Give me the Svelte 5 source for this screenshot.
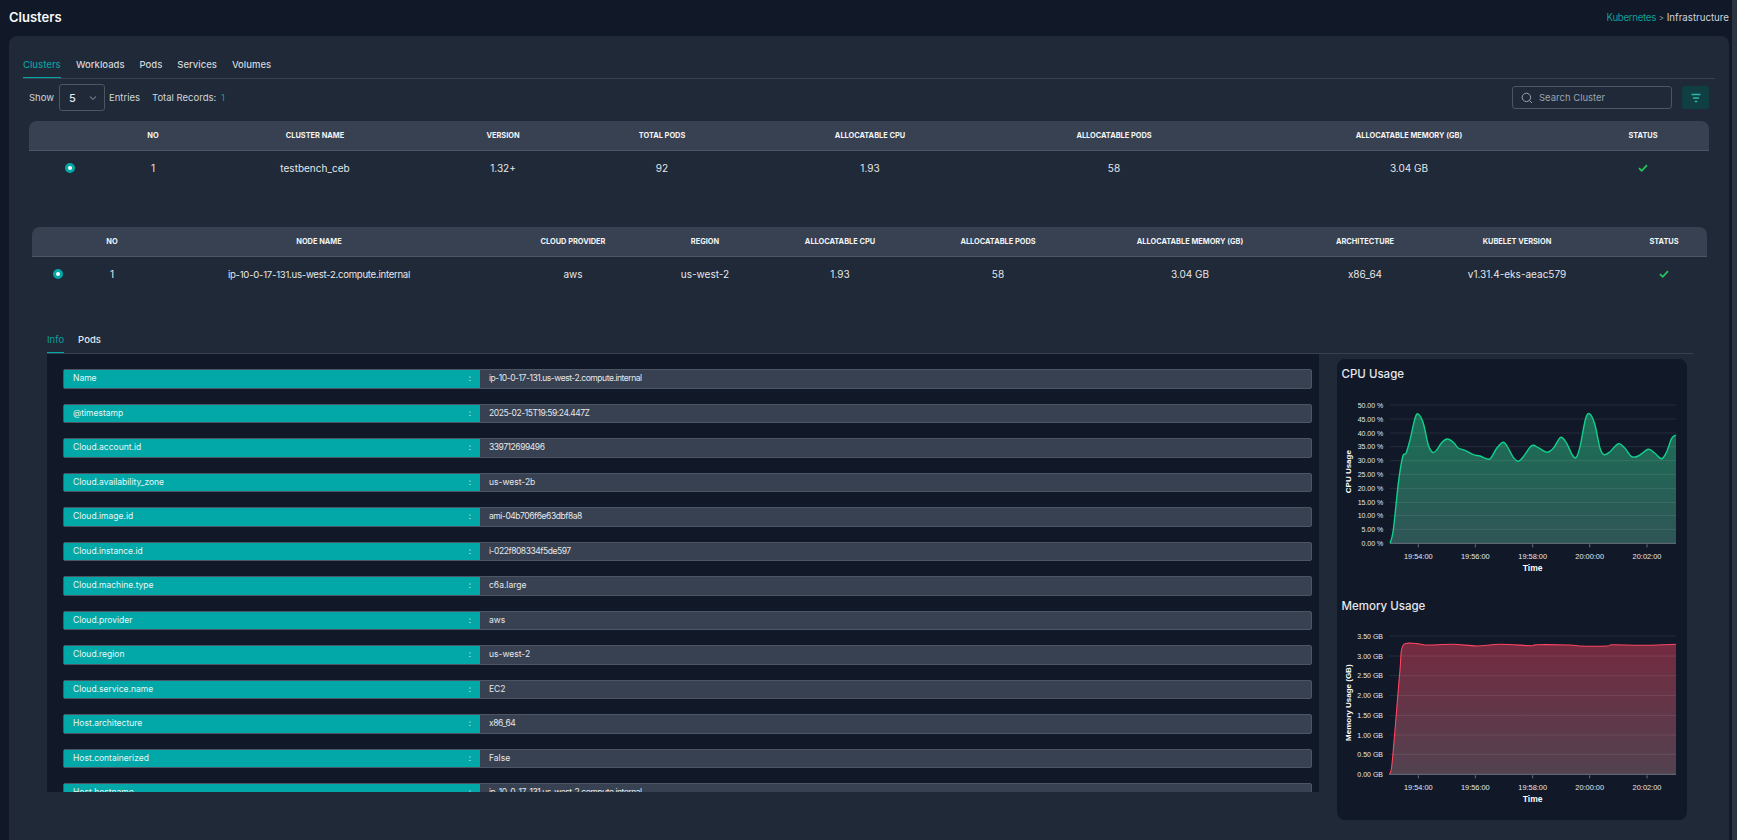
<script>
  const clusterHead = ['', 'NO', 'CLUSTER NAME', 'VERSION', 'TOTAL PODS', 'ALLOCATABLE CPU', 'ALLOCATABLE PODS', 'ALLOCATABLE MEMORY (GB)', 'STATUS'];
  const clusterRow = ['1', 'testbench_ceb', '1.32+', '92', '1.93', '58', '3.04 GB'];
  const nodeHead = ['', 'NO', 'NODE NAME', 'CLOUD PROVIDER', 'REGION', 'ALLOCATABLE CPU', 'ALLOCATABLE PODS', 'ALLOCATABLE MEMORY (GB)', 'ARCHITECTURE', 'KUBELET VERSION', 'STATUS'];
  const nodeRow = ['1', 'ip-10-0-17-131.us-west-2.compute.internal', 'aws', 'us-west-2', '1.93', '58', '3.04 GB', 'x86_64', 'v1.31.4-eks-aeac579'];
  const info = [
    ['Name', 'ip-10-0-17-131.us-west-2.compute.internal'],
    ['@timestamp', '2025-02-15T19:59:24.447Z'],
    ['Cloud.account.id', '339712699496'],
    ['Cloud.availability_zone', 'us-west-2b'],
    ['Cloud.image.id', 'ami-04b706f6e63dbf8a8'],
    ['Cloud.instance.id', 'i-022f808334f5de597'],
    ['Cloud.machine.type', 'c6a.large'],
    ['Cloud.provider', 'aws'],
    ['Cloud.region', 'us-west-2'],
    ['Cloud.service.name', 'EC2'],
    ['Host.architecture', 'x86_64'],
    ['Host.containerized', 'False'],
    ['Host.hostname', 'ip-10-0-17-131.us-west-2.compute.internal']
  ];
  const digitHeavy = (s) => /\d.*\d.*\d.*\d/.test(s);

  const cpuPts = [[210,580],[220,540],[235,400],[248,320],[258,310],[270,270],[285,205],[295,192],[310,220],[325,285],[338,307],[350,300],[365,278],[382,267],[400,277],[415,294],[435,301],[460,314],[480,318],[500,326],[512,325],[530,295],[550,277],[565,295],[580,322],[595,334],[610,320],[635,287],[655,293],[680,307],[700,295],[722,262],[740,280],[755,312],[768,323],[780,290],[797,205],[810,192],[825,225],[840,295],[852,314],[870,305],[895,281],[915,295],[935,320],[955,318],[985,298],[1005,310],[1025,326],[1040,305],[1055,265],[1068,255]];
  const memPts = [[208,553],[215,530],[225,420],[240,240],[250,165],[300,162],[320,165],[400,163],[470,168],[540,163],[635,167],[650,164],[750,165],[780,168],[860,168],[880,164],[980,166],[1068,163]];

  function smooth(pts, ox, oy) {
    const p = pts.map(([x, y]) => [x / 3 - ox, y / 3 - oy]);
    let d = `M${p[0][0].toFixed(1)} ${p[0][1].toFixed(1)}`;
    for (let i = 0; i < p.length - 1; i++) {
      const a = p[Math.max(i - 1, 0)], b = p[i], c = p[i + 1], e = p[Math.min(i + 2, p.length - 1)];
      d += `C${(b[0] + (c[0] - a[0]) / 6).toFixed(1)} ${(b[1] + (c[1] - a[1]) / 6).toFixed(1)} ${(c[0] - (e[0] - b[0]) / 6).toFixed(1)} ${(c[1] - (e[1] - b[1]) / 6).toFixed(1)} ${c[0].toFixed(1)} ${c[1].toFixed(1)}`;
    }
    return d;
  }

  const timeLabels = ['19:54:00', '19:56:00', '19:58:00', '20:00:00', '20:02:00'];
  const tickX = [295, 466, 638, 809, 981].map((x) => x / 3 - 17);

  const charts = [
    {
      id: 'cpu', title: 'CPU Usage', axis: 'CPU Usage', oy: 39, x0: 210, base: 580, axisY: 365, h: 208, sw: 1.4,
      line: smooth(cpuPts, 17, 39),
      labels: ['50.00 %','45.00 %','40.00 %','35.00 %','30.00 %','25.00 %','20.00 %','15.00 %','10.00 %','5.00 %','0.00 %'],
      grid: [165,207,249,290,332,373,415,457,497,538,580], top: '#1a7056', bottom: '#2f5556', stroke: '#10d08c', lab: 190
    },
    {
      id: 'mem', title: 'Memory Usage', axis: 'Memory Usage (GB)', oy: 31, x0: 208, base: 553, axisY: 338, h: 192, sw: 1.1,
      line: smooth(memPts, 17, 31),
      labels: ['3.50 GB','3.00 GB','2.50 GB','2.00 GB','1.50 GB','1.00 GB','0.50 GB','0.00 GB'],
      grid: [138,198,257,316,376,435,493,553], top: '#742a40', bottom: '#524250', stroke: '#ff4560', lab: 189
    }
  ];
</script>

<div class="page">
  <main class="main">
    <header class="topbar">
      <h1>Clusters</h1>
      <div class="crumb"><span class="teal kube">Kubernetes</span> <span class="sep">&gt;</span> <span>Infrastructure</span></div>
    </header>

    <section class="card">
      <nav class="tabs">
        <span class="tab active">Clusters</span>
        <span class="tab">Workloads</span>
        <span class="tab">Pods</span>
        <span class="tab">Services</span>
        <span class="tab">Volumes</span>
      </nav>

      <div class="toolbar">
        <span>Show</span>
        <div class="select">
          <span>5</span>
          <svg width="8" height="6" viewBox="0 0 8 6"><path d="M1 1.5 4 4.5 7 1.5" fill="none" stroke="#6b7280" stroke-width="1.1"/></svg>
        </div>
        <span>Entries</span>
        <span class="records">Total Records: <b class="teal">1</b></span>
        <div class="search">
          <svg width="12" height="12" viewBox="0 0 12 12"><circle cx="5.4" cy="5.4" r="4.2" fill="none" stroke="#9ca3af" stroke-width="1"/><path d="M8.5 8.5 11 11" stroke="#9ca3af" stroke-width="1"/></svg>
          <span>Search Cluster</span>
        </div>
        <div class="filter">
          <svg width="12" height="10" viewBox="0 0 12 10"><path d="M1.5 1.5h9M3 5h6M4.8 8.5h2.4" stroke="#2bb8ad" stroke-width="1.3" fill="none"/></svg>
        </div>
      </div>

      <div class="table t1">
        <div class="thead">
          {#each clusterHead as h}<div class="cell">{h}</div>{/each}
        </div>
        <div class="trow">
          <div class="cell radio-cell"><span class="radio"></span></div>
          {#each clusterRow as c}<div class="cell">{c}</div>{/each}
          <div class="cell">
            <svg class="check" width="10" height="8" viewBox="0 0 10 8"><path d="M1 4.2 3.7 6.8 9 1.2" fill="none" stroke="#22c55e" stroke-width="1.8"/></svg>
          </div>
        </div>
      </div>

      <div class="table t2">
        <div class="thead">
          {#each nodeHead as h}<div class="cell">{h}</div>{/each}
        </div>
        <div class="trow">
          <div class="cell radio-cell"><span class="radio"></span></div>
          {#each nodeRow as c, i}<div class="cell" class:tight={i === 1}>{c}</div>{/each}
          <div class="cell">
            <svg class="check" width="10" height="8" viewBox="0 0 10 8"><path d="M1 4.2 3.7 6.8 9 1.2" fill="none" stroke="#22c55e" stroke-width="1.8"/></svg>
          </div>
        </div>
      </div>

      <div class="detail">
        <nav class="subtabs">
          <span class="subtab active">Info</span>
          <span class="subtab">Pods</span>
        </nav>
        <div class="detail-body">
          <div class="panel">
            {#each info as [k, v]}
              <div class="kv">
                <div class="key"><span>{k}</span><span>:</span></div>
                <div class="val" class:digits={digitHeavy(v)}>{v}</div>
              </div>
            {/each}
          </div>
          <aside class="chart-card">
            {#each charts as c}
              <h2>{c.title}</h2>
              <svg class="chart" width="350" height={c.h}>
                <defs>
                  <linearGradient id="fill-{c.id}" x1="0" y1="0" x2="0" y2="1">
                    <stop offset="0" stop-color={c.top}/>
                    <stop offset="1" stop-color={c.bottom}/>
                  </linearGradient>
                </defs>
                <path d="{c.line}L{1068 / 3 - 17} {c.base / 3 - c.oy}L{c.x0 / 3 - 17} {c.base / 3 - c.oy}Z" fill="url(#fill-{c.id})"/>
                {#each c.grid as g, i}
                  <line x1={c.x0 / 3 - 17} x2={1068 / 3 - 17} y1={g / 3 - c.oy} y2={g / 3 - c.oy} class={i === c.grid.length - 1 ? 'base' : 'grid'}/>
                  <text class="ylab" x={c.lab / 3 - 17} y={g / 3 - c.oy + 2.5}>{c.labels[i]}</text>
                {/each}
                <path d={c.line} fill="none" stroke={c.stroke} stroke-width={c.sw}/>
                {#each tickX as x, i}
                  <line class="tick" x1={x} x2={x} y1={c.base / 3 - c.oy + 1} y2={c.base / 3 - c.oy + 4}/>
                  <text class="xlab" x={x} y={c.base / 3 - c.oy + 15.5}>{timeLabels[i]}</text>
                {/each}
                <text class="axis-x" x={638 / 3 - 17} y={c.base / 3 - c.oy + 28}>Time</text>
                <text class="axis-y" transform="translate({85 / 3 - 17 + 3} {c.axisY / 3 - c.oy}) rotate(-90)">{c.axis}</text>
              </svg>
            {/each}
          </aside>
        </div>
      </div>
    </section>
  </main>
  <div class="scrollbar"></div>
</div>

<style>
  :global(body) { margin: 0; background: #111827; }
  .page {
    display: grid; grid-template-columns: 1fr 5px; height: 840px; overflow: hidden;
    background: #111827; color: #e5e7eb;
    font-family: Inter, "Open Sans", sans-serif; font-size: 10px;
  }
  .scrollbar { background: #2b3441; }
  .main { padding: 0 3px 0 9px; min-width: 0; }
  .topbar { height: 36px; display: flex; justify-content: space-between; align-items: center; box-sizing: border-box; padding-bottom: 2px; }
  h1 { margin: 0; font-size: 13px; font-weight: 600; color: #f9fafb; }
  .crumb { font-size: 9.7px; color: #d1d5db; }
  .kube { letter-spacing: -0.3px; }
  .sep { color: #9ca3af; font-size: 8px; }
  .teal { color: #0d9f9b; font-weight: 400; }
  .card { background: #1f2937; border-radius: 8px 8px 0 0; height: 804px; padding: 16px 14px 0; box-sizing: border-box; overflow: hidden; }
  .tabs { display: flex; height: 26px; border-bottom: 1px solid #374151; gap: 15px; }
  .tab { height: 26px; box-sizing: border-box; padding-top: 7px; font-size: 9.5px; font-weight: 500; color: #d1d5db; }
  .tab.active { color: #0d9f9b; border-bottom: 1px solid #02a7a7; width: 38px; }
  .toolbar { display: flex; align-items: center; height: 27px; margin: 5px 6px 10px; color: #d1d5db; font-size: 9.5px; }
  .select { width: 46px; height: 27px; margin: 0 4px 0 5px; box-sizing: border-box; border: 1px solid #4b5563; border-radius: 3px; display: flex; align-items: center; justify-content: space-between; padding: 0 7px 0 9px; font-size: 11px; font-weight: 500; color: #e5e7eb; }
  .records { margin-left: 12px; }
  .records b { margin-left: 2px; }
  .search { margin-left: auto; width: 160px; height: 23px; box-sizing: border-box; border: 1px solid #4b5563; border-radius: 3px; display: flex; align-items: center; gap: 6px; padding-left: 8px; color: #9ca3af; font-size: 9.5px; }
  .filter { width: 27px; height: 23px; margin-left: 10px; border-radius: 3px; background: #0f3f43; display: flex; align-items: center; justify-content: center; }

  .table { text-align: center; }
  .t1 { margin: 0 6px; }
  .t2 { margin: 42px 8px 0 9px; }
  .thead, .trow { display: grid; align-items: center; }
  .t1 .thead, .t1 .trow { grid-template-columns: 82px 84px 240px 136px 182px 234px 254px 336px 132px; }
  .t2 .thead, .t2 .trow { grid-template-columns: 37px 86px 328px 180px 84px 186px 130px 254px 96px 208px 86px; }
  .thead { height: 30px; box-sizing: border-box; background: #374151; border-bottom: 1px solid #4b5563; border-radius: 8px 8px 0 0; font-size: 7.4px; font-weight: 700; color: #f3f4f6; }
  .trow { height: 34px; font-size: 10px; color: #e5e7eb; }
  .tight { font-size: 9.6px; letter-spacing: -0.27px; }
  .radio-cell { display: flex; }
  .t1 .radio-cell { padding-left: 36px; }
  .t2 .radio-cell { padding-left: 21px; }
  .radio { width: 10px; height: 10px; border-radius: 50%; background: #fff; border: 3px solid #02a7a7; box-sizing: border-box; }
  .check { display: block; margin: 0 auto; }

  .detail { margin: 36px 22px 0 24px; }
  .subtabs { display: flex; height: 26px; border-bottom: 1px solid #374151; gap: 14px; }
  .subtab { height: 26px; box-sizing: border-box; padding-top: 7px; font-size: 9.5px; font-weight: 500; color: #e5e7eb; }
  .subtab.active { color: #0d9f9b; border-bottom: 1px solid #02a7a7; font-weight: 400; }
  .detail-body { display: flex; align-items: flex-start; }
  .panel { width: 1272px; height: 438px; box-sizing: border-box; background: #111827; padding: 15px 7px 0 16px; overflow: hidden; display: flex; flex-direction: column; gap: 15px; flex: none; }
  .kv { display: flex; flex: none; height: 19.5px; box-sizing: border-box; border: 1px solid #4b5563; border-radius: 2px; background: #374151; }
  .key { width: 416px; flex: none; background: #02a7a7; color: #e6f7f7; display: flex; justify-content: space-between; padding: 0 9px 1px; box-sizing: border-box; align-items: center; font-size: 8.5px; }
  .val { padding: 0 0 1px 9px; display: flex; align-items: center; font-size: 8.5px; color: #e5e7eb; }
  .val.digits { letter-spacing: -0.45px; }
  .chart-card { margin: 5px 0 0 18px; width: 350px; height: 461px; flex: none; box-sizing: border-box; background: #111827; border-radius: 8px; padding-top: 7px; }
  h2 { margin: 0 0 7px 4.5px; font-size: 11.5px; line-height: 16px; font-weight: 500; color: #e5e7eb; }
  .chart { display: block; margin-bottom: 1px; }
  .chart text { font-family: "Liberation Sans", Arial, sans-serif; }
  .grid { stroke: rgba(255, 255, 255, 0.09); stroke-width: 1; }
  .base { stroke: #6b7280; stroke-width: 1; }
  .tick { stroke: #6b7280; stroke-width: 1; }
  .ylab { font-size: 7px; fill: #e5e7eb; text-anchor: end; }
  .xlab { font-size: 7.4px; fill: #e5e7eb; text-anchor: middle; }
  .axis-x { font-size: 8.5px; font-weight: 700; fill: #fff; text-anchor: middle; }
  .axis-y { font-size: 8px; font-weight: 700; fill: #fff; text-anchor: middle; }
</style>
